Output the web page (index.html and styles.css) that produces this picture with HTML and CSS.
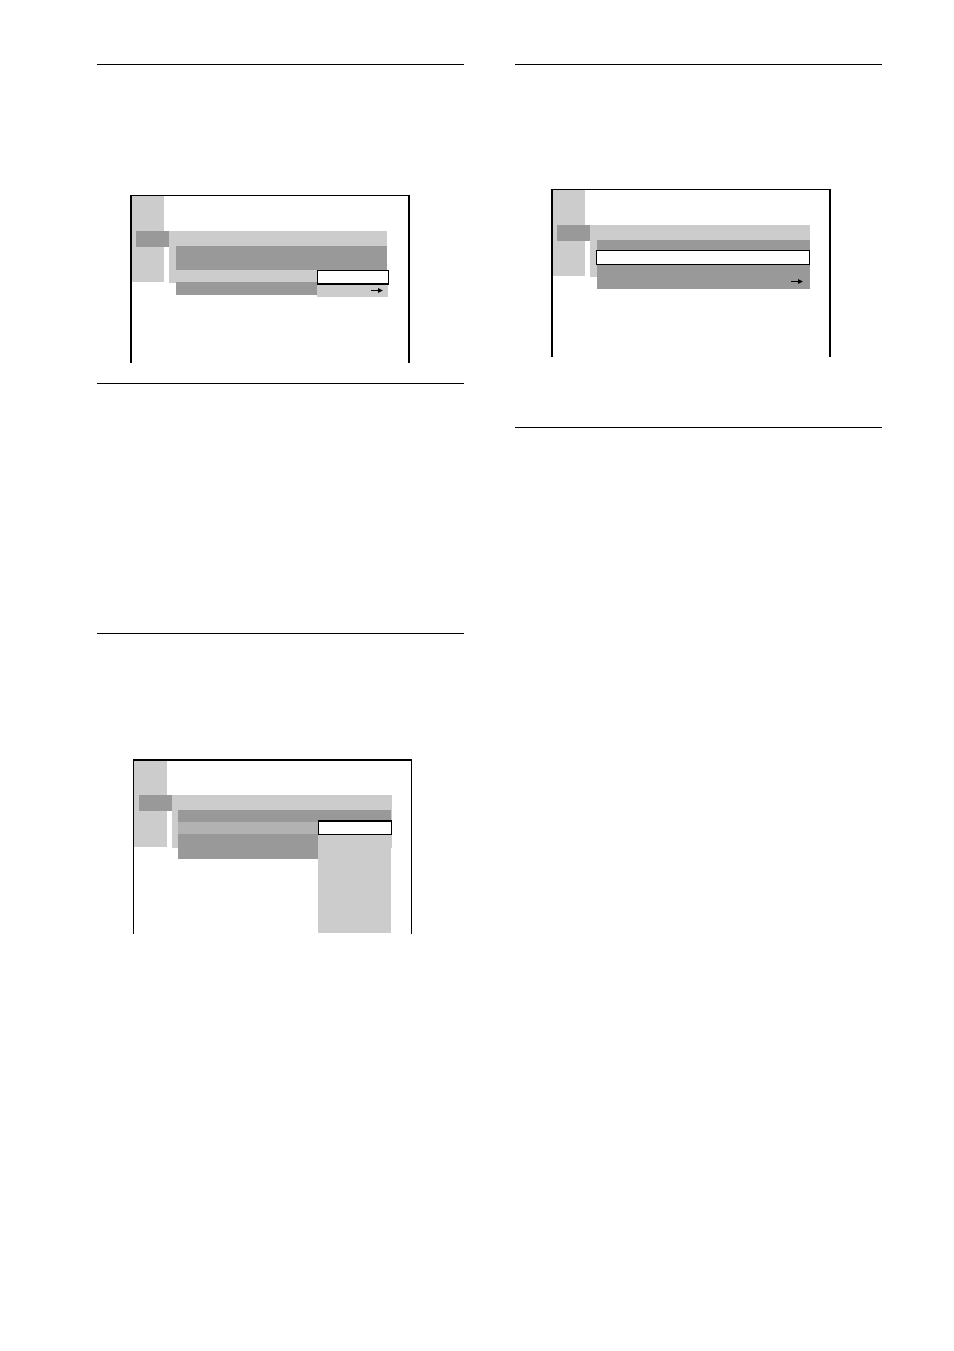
FILE: index.html
```html
<!DOCTYPE html>
<html lang="en">
<head>
<meta charset="utf-8">
<title>Menu displays</title>
<link rel="stylesheet" href="styles.css">
</head>
<body>
<main class="page">
  <div class="column">
    <section class="block block-setup">
      <figure class="screen">
        <div class="rail"><div class="tab"></div></div>
        <div class="panel">
          <div class="rows">
            <div class="row row-double"></div>
            <div class="row row-light"></div>
            <div class="row row-last"></div>
          </div>
          <div class="popup popup-short">
            <div class="choice"></div>
            <div class="options">
              <svg class="arrow" viewBox="0 0 12 5" aria-hidden="true"><path d="M0 2h7V0l5 2.500-5 2.500V3H0z"/></svg>
            </div>
          </div>
        </div>
      </figure>
    </section>
    <section class="block block-notes"></section>
    <section class="block block-list">
      <figure class="screen screen-list">
        <div class="rail"><div class="tab"></div></div>
        <div class="panel">
          <div class="rows">
            <div class="row"></div>
            <div class="row row-mid"></div>
            <div class="row row-tall"></div>
          </div>
          <div class="popup popup-long">
            <div class="choice"></div>
            <div class="options"></div>
          </div>
        </div>
      </figure>
    </section>
  </div>
  <div class="column">
    <section class="block block-bar">
      <figure class="screen">
        <div class="rail"><div class="tab"></div></div>
        <div class="panel">
          <div class="rows">
            <div class="row row-thin"></div>
            <div class="row row-selected"></div>
            <div class="row row-arrow">
              <svg class="arrow" viewBox="0 0 12 5" aria-hidden="true"><path d="M0 2h7V0l5 2.500-5 2.500V3H0z"/></svg>
            </div>
          </div>
        </div>
      </figure>
    </section>
    <section class="block"></section>
  </div>
</main>
</body>
</html>
```

FILE: styles.css
```css
* { box-sizing: border-box; }
body { margin: 0; background: #fff; font-family: "Liberation Sans", Arial, sans-serif; }
.page {
  display: grid;
  grid-template-columns: 1fr 1fr;
  gap: 51px;
  min-height: 100vh;
  padding: 64px 72px 64px 97px;
}
.block { border-top: 1px solid #000; }
.block-setup { padding: 130px 54px 20px 33px; }
.block-notes { padding-top: 249px; }
.block-list { padding: 125px 52px 0 36px; }
.block-bar { padding: 124px 51px 70px 36px; }

.screen {
  display: flex;
  gap: 5px;
  min-height: 168px;
  margin: 0;
  padding-right: 21px;
  border: 2px solid #000;
  border-top-width: 1px;
  border-bottom: 0;
}
.rail { width: 32px; height: 86px; padding: 35px 0 0 4px; background: #ccc; }
.tab { width: 33px; height: 16px; background: #999; }
.panel {
  position: relative;
  flex: 1;
  height: 52px;
  margin-top: 35px;
  padding: 15px 0 0 7px;
  background: #ccc;
}
.row { height: 12px; background: #999; }
.row-double { height: 24px; }
.row-light { background: #ccc; }
.row-last { height: 13px; }
.row-mid { background: #b2b2b2; }
.row-tall { height: 25px; }
.row-thin { height: 10px; }
.row-selected { height: 15px; margin-left: -1px; background: #fff; border: 1px solid #000; }
.row-arrow { display: flex; justify-content: flex-end; height: 24px; padding: 14px 7px 0 0; }
.arrow { display: block; width: 12px; height: 5px; }

.popup { position: absolute; }
.choice { height: 15px; background: #fff; border: 1px solid #000; }
.options { display: flex; justify-content: flex-end; margin-right: 1px; background: #ccc; }
.popup-short { top: 39px; right: -2px; width: 72px; }
.popup-short .choice { border-bottom-width: 2px; }
.popup-short .options { height: 12px; padding: 3px 5px 0 0; }
.popup-long { top: 25px; right: 0; width: 74px; }
.popup-long .choice { border-top-width: 2px; }
.popup-long .options { height: 98px; }

.screen-list { min-height: 175px; padding-right: 19px; border-width: 2px 1px 0; }
.screen-list .rail { width: 33px; padding: 34px 0 0 5px; }
.screen-list .panel { height: 53px; margin-top: 34px; padding: 15px 1px 0 6px; }

.block-bar .screen { padding-right: 19px; }
```
